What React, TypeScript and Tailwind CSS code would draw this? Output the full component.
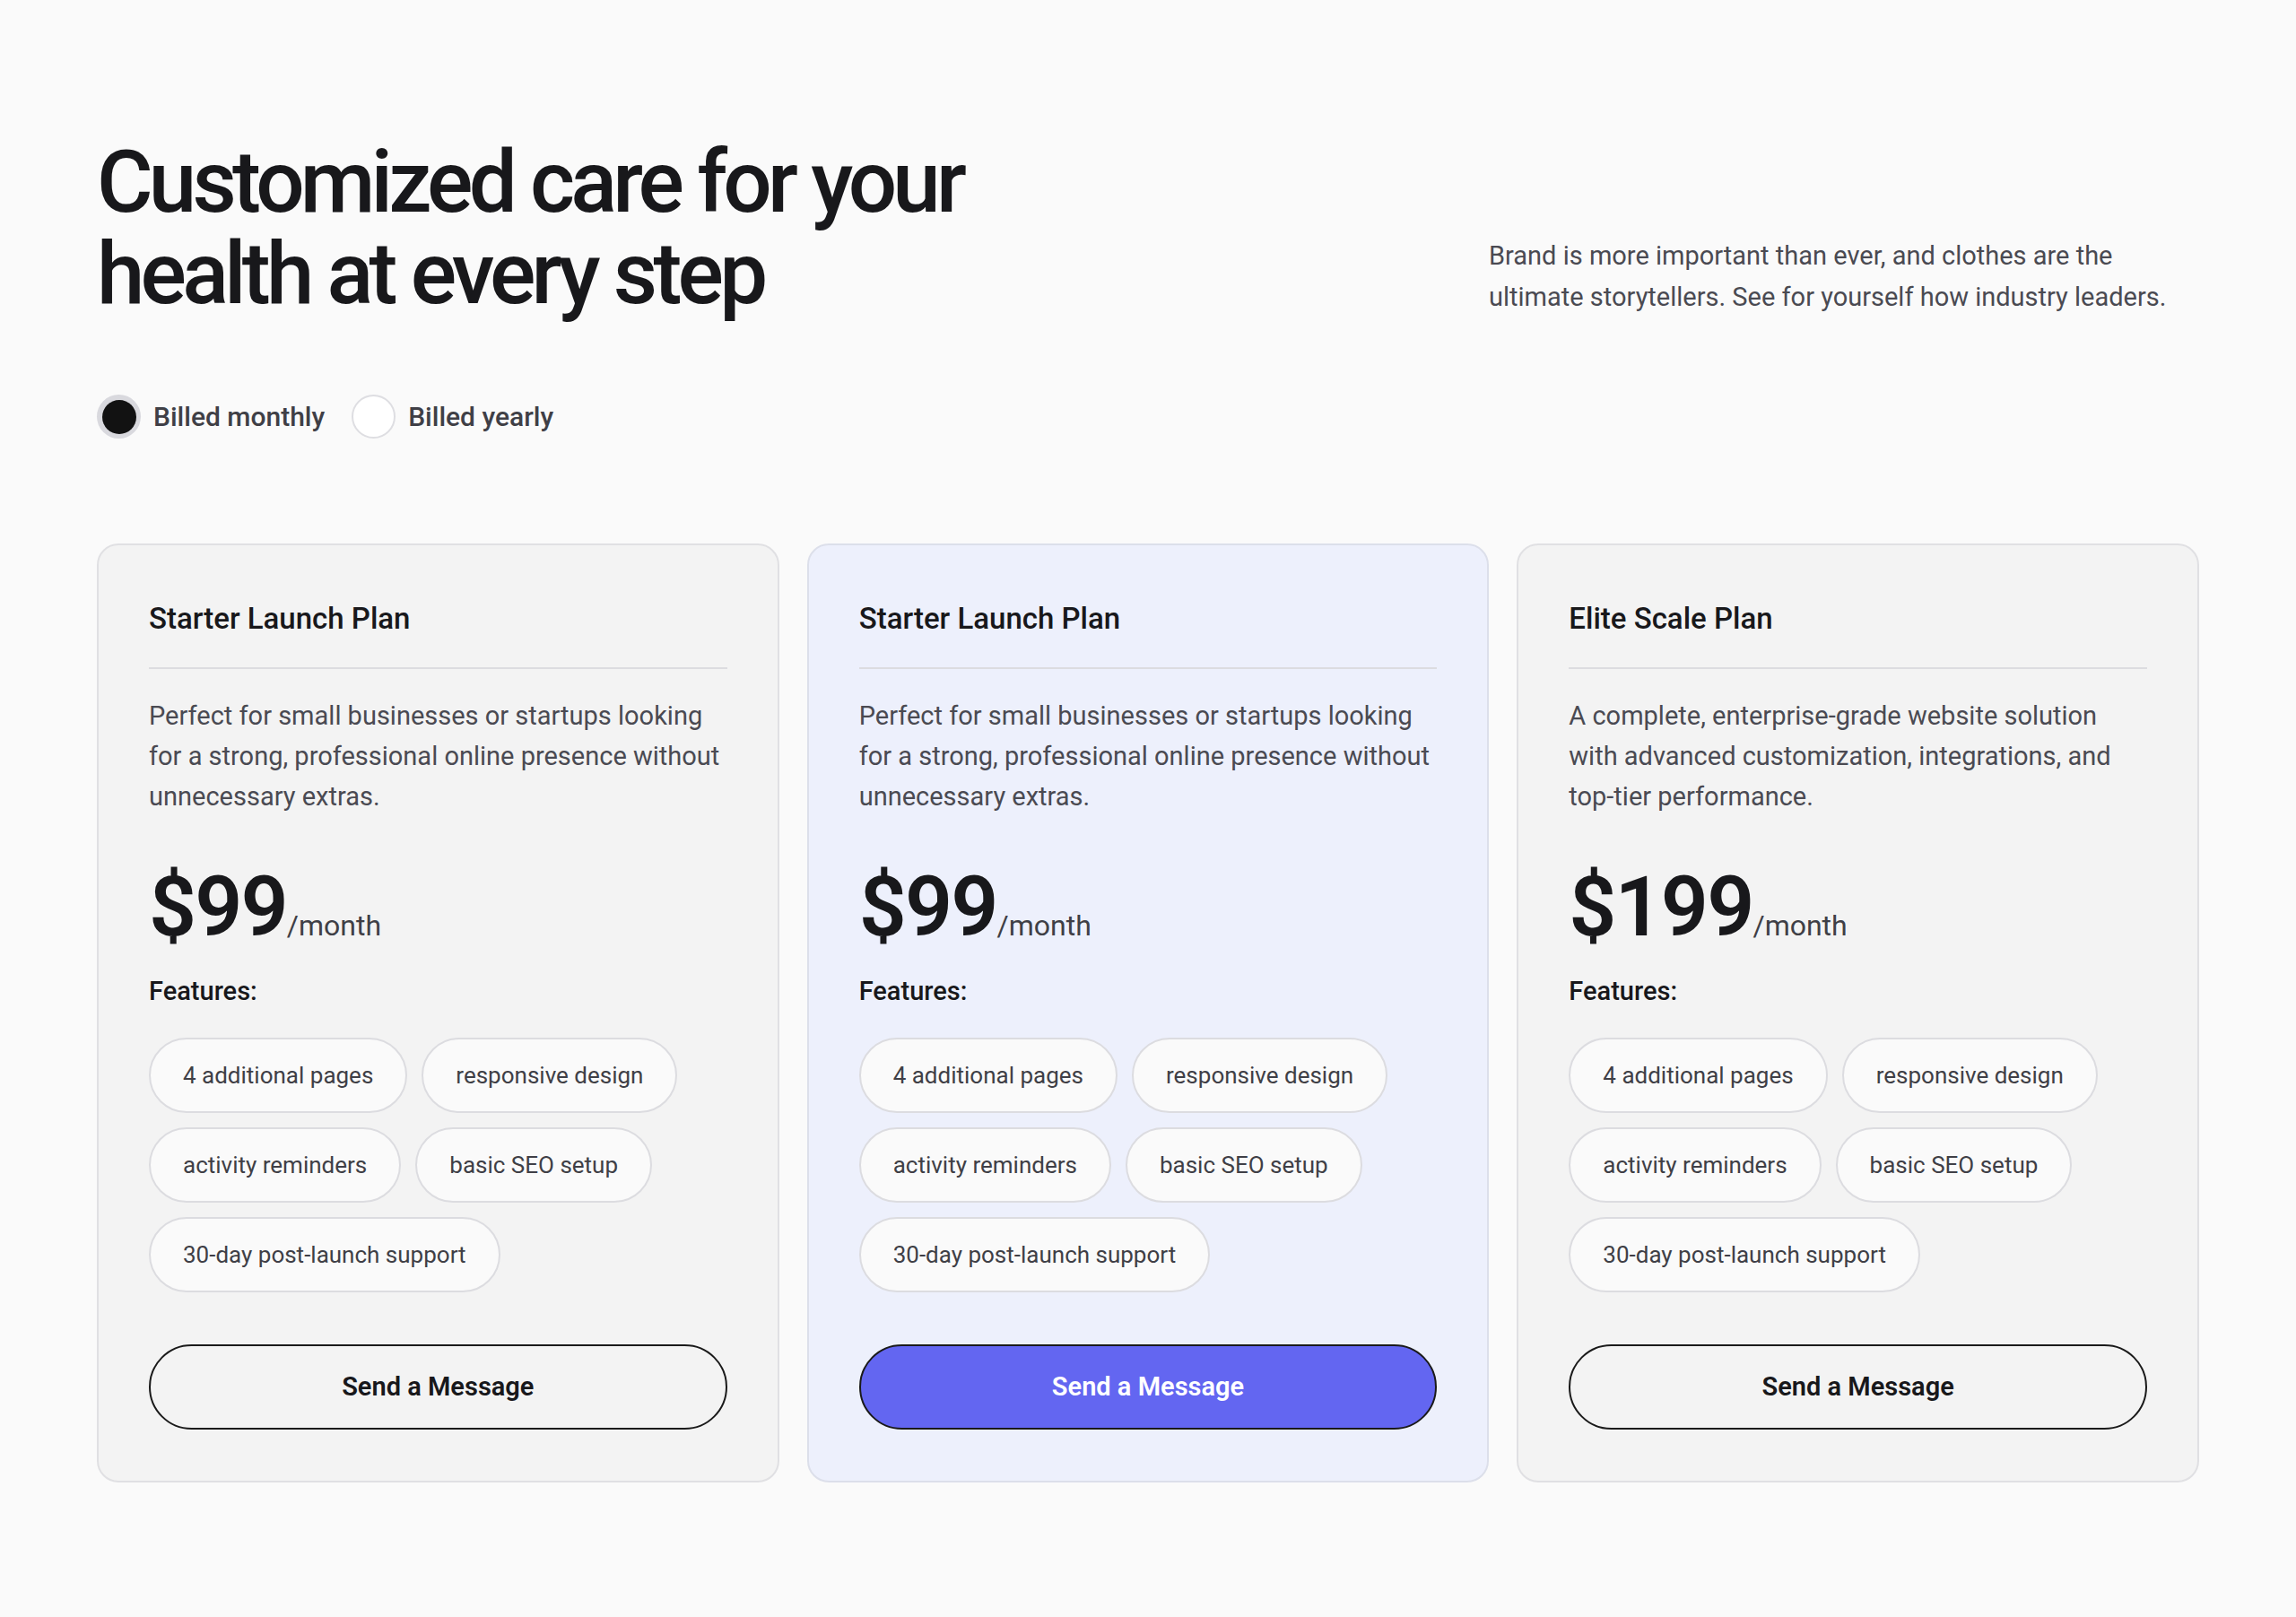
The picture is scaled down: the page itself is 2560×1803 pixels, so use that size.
import React, { useState } from "react";

const plans = [
    {
        name: "Starter Launch Plan",
        description:
            "Perfect for small businesses or startups looking for a strong, professional online presence without unnecessary extras.",
        price: "$99",
        featured: false,
    },
    {
        name: "Starter Launch Plan",
        description:
            "Perfect for small businesses or startups looking for a strong, professional online presence without unnecessary extras.",
        price: "$99",
        featured: true,
    },
    {
        name: "Elite Scale Plan",
        description:
            "A complete, enterprise-grade website solution with advanced customization, integrations, and top-tier performance.",
        price: "$199",
        featured: false,
    },
];

const features = [
    "4 additional pages",
    "responsive design",
    "activity reminders",
    "basic SEO setup",
    "30-day post-launch support",
];

function Radio({ checked, label, onClick }: { checked: boolean; label: string; onClick: () => void }) {
    return (
        <button onClick={onClick} className="flex items-center gap-[14px]">
            {checked ? (
                <span className="w-[49px] h-[49px] rounded-full bg-[#d9d9de] flex items-center justify-center">
                    <span className="w-[38px] h-[38px] rounded-full bg-[#121212]" />
                </span>
            ) : (
                <span className="w-[49px] h-[49px] rounded-full bg-white border-2 border-[#dedee2]" />
            )}
            <span className="text-[30px] font-medium text-[#3f3f46]">{label}</span>
        </button>
    );
}

export default function App() {
    const [billing, setBilling] = useState<"monthly" | "yearly">("monthly");

    return (
        <div
            className="min-h-screen bg-[#fafafa] px-[108px] pt-[152px] pb-[150px]"
            style={{ fontFamily: "Roboto, 'Liberation Sans', sans-serif" }}
        >
            <div className="flex justify-between items-end">
                <h1 className="text-[96px] leading-[102px] font-medium tracking-[-0.05em] text-[#18181b]">
                    Customized care for your
                    <br />
                    health at every step
                </h1>
                <p className="w-[792px] pr-[10px] text-[29px] leading-[46px] text-[#4a4a52] mb-[2px]">
                    Brand is more important than ever, and clothes are the ultimate storytellers. See for yourself how
                    industry leaders.
                </p>
            </div>

            <div className="flex items-center gap-[30px] mt-[84px]">
                <Radio checked={billing === "monthly"} label="Billed monthly" onClick={() => setBilling("monthly")} />
                <Radio checked={billing === "yearly"} label="Billed yearly" onClick={() => setBilling("yearly")} />
            </div>

            <div className="grid grid-cols-3 gap-[31px] mt-[117px]">
                {plans.map((plan, i) => (
                    <div
                        key={i}
                        className={`rounded-[24px] border-2 px-[56px] pt-[58px] pb-[57px] flex flex-col ${
                            plan.featured ? "bg-[#edf0fc] border-[#dcdfea]" : "bg-[#f3f3f3] border-[#e0e0e3]"
                        }`}
                    >
                        <h3 className="text-[33px] leading-[48px] font-medium text-[#18181b]">{plan.name}</h3>
                        <div className="h-[2px] bg-[#dcdce0] mt-[30px]" />
                        <p className="text-[29px] leading-[45px] text-[#4a4a52] mt-[30px]">{plan.description}</p>

                        <div className="flex items-baseline mt-[56px]">
                            <span className="text-[93px] leading-[90px] font-semibold tracking-[-0.02em] text-[#18181b]">
                                {plan.price}
                            </span>
                            <span className="text-[32px] text-[#3f3f46]">/month</span>
                        </div>

                        <p className="text-[29px] leading-[40px] font-medium text-[#18181b] mt-[28px]">Features:</p>

                        <div className="flex flex-wrap gap-4 mt-[32px]">
                            {features.map(f => (
                                <span
                                    key={f}
                                    className="h-[84px] px-9 flex items-center rounded-full bg-[#fafafa] border-2 border-[#dcdce0] text-[26px] text-[#3f3f46]"
                                >
                                    {f}
                                </span>
                            ))}
                        </div>

                        <button
                            className={`mt-[58px] h-[95px] w-full rounded-full border-2 border-[#1a1a1a] text-[29px] font-semibold ${
                                plan.featured ? "bg-[#6366f1] text-white" : "bg-transparent text-[#18181b]"
                            }`}
                        >
                            Send a Message
                        </button>
                    </div>
                ))}
            </div>
        </div>
    );
}
